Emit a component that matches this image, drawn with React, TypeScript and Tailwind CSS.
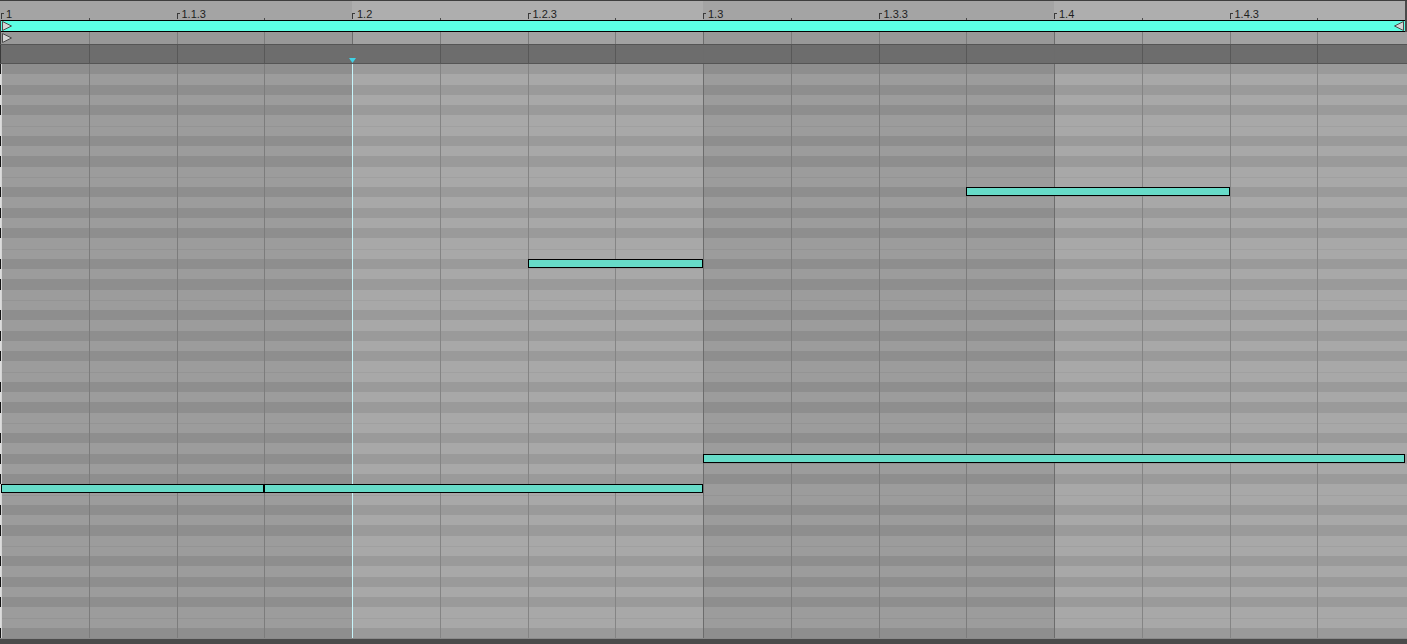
import React from "react";

const ROWS = Array.from({ length: 56 }, (_, i) => i);
const isBlack = (i: number) => [0, 2, 4, 7, 9].includes(i % 12);
const BEATS = [0, 1, 2, 3];
const BEAT_LABELS = ["1", "1.2", "1.3", "1.4"];
const HALF_LABELS = ["1.1.3", "1.2.3", "1.3.3", "1.4.3"];

const NOTES = [
  { k1: 0, k2: 3, row: 41 },
  { k1: 3, k2: 8, row: 41 },
  { k1: 6, k2: 8, row: 19 },
  { k1: 11, k2: 14, row: 12 },
  { k1: 8, k2: 16, row: 38 },
];

const SIX = 87.75;
const ROWH = 10.25;

function rowClass(i: number, light: boolean) {
  if (isBlack(i)) return light ? "bg-[#9a9a9a]" : "bg-[#8e8e8e]";
  const sep = i % 12 === 6 || i % 12 === 11;
  if (light) return sep ? "bg-[#a8a8a8] border-t border-[#a0a0a0]" : "bg-[#a8a8a8]";
  return sep ? "bg-[#9c9c9c] border-t border-[#949494]" : "bg-[#9c9c9c]";
}

function Rows({ light }: { light: boolean }) {
  return (
    <div className="grid h-full grid-rows-[repeat(56,minmax(0,1fr))]">
      {ROWS.map((i) => (
        <div key={i} className={rowClass(i, light)} />
      ))}
    </div>
  );
}

function KeyEdge() {
  return (
    <div className="grid h-full w-px grid-rows-[repeat(56,minmax(0,1fr))]">
      {ROWS.map((i) => (
        <div key={i} className={isBlack(i) ? "bg-[#141414]" : "bg-[#dcdcdc]"} />
      ))}
    </div>
  );
}

function Lines({ beat, first, line }: { beat: number; first: string; line: string }) {
  return (
    <>
      <div className={beat === 0 ? first : "border-l border-[#6c6c6c]"} />
      <div className={line} />
      <div className={line} />
      <div className={line} />
    </>
  );
}

function TriRight() {
  return (
    <svg width="10" height="10" viewBox="0 0 10 10" className="block shrink-0">
      <polygon points="0.5,0.5 9.5,5 0.5,9.5" fill="#d4d4d4" stroke="#4a4a4a" strokeWidth="1" />
    </svg>
  );
}

function TriLeft() {
  return (
    <svg width="10" height="10" viewBox="0 0 10 10" className="block shrink-0">
      <polygon points="9.5,0.5 0.5,5 9.5,9.5" fill="#d4d4d4" stroke="#4a4a4a" strokeWidth="1" />
    </svg>
  );
}

export default function App() {
  return (
    <div className="flex h-[644px] w-[1407px] flex-col overflow-hidden bg-[#4b4b4b] font-['Liberation_Sans',Arial,sans-serif]">
      {/* top line */}
      <div className="h-px shrink-0 bg-[#3e3e3e]" />

      {/* ruler */}
      <div className="flex h-[19px] shrink-0">
        <div className="w-px bg-[#a4a4a4]" />
        <div className="flex w-[1404px]">
          {BEATS.map((b) => (
            <div
              key={b}
              className={"grid flex-1 grid-cols-4 " + (b % 2 === 0 ? "bg-[#a4a4a4]" : "bg-[#aeaeae]")}
            >
              <div className="flex items-start">
                <div className="mt-[12px] h-[6px] w-[3px] border-l border-t border-[#3a3a3a]" />
                <span className="ml-[2px] mt-[8px] text-[11px] leading-[11px] text-[#1e1e1e]">
                  {BEAT_LABELS[b]}
                </span>
              </div>
              <div className="flex items-start">
                <div className="mt-[17px] h-[2px] w-px bg-[#4a4a4a]" />
              </div>
              <div className="flex items-start">
                <div className="mt-[12px] h-[6px] w-[3px] border-l border-t border-[#3a3a3a]" />
                <span className="ml-[2px] mt-[8px] text-[11px] leading-[11px] text-[#1e1e1e]">
                  {HALF_LABELS[b]}
                </span>
              </div>
              <div className="flex items-start">
                <div className="mt-[17px] h-[2px] w-px bg-[#4a4a4a]" />
              </div>
            </div>
          ))}
        </div>
        <div className="w-[2px] bg-[#4a4a4a]" />
      </div>

      {/* loop bar */}
      <div className="flex h-[12px] shrink-0">
        <div className="w-px bg-[#3a3a3a]" />
        <div className="flex w-[1404px] items-center justify-between border-y border-black bg-[#5cffe4]">
          <div className="ml-px">
            <TriRight />
          </div>
          <div className="mr-px">
            <TriLeft />
          </div>
        </div>
        <div className="w-[2px] bg-[#4a4a4a]" />
      </div>

      {/* marker row */}
      <div className="flex h-[12px] shrink-0">
        <div className="w-px bg-[#3a3a3a]" />
        <div className="relative flex w-[1404px]">
          {BEATS.map((b) => (
            <div
              key={b}
              className={"grid flex-1 grid-cols-4 " + (b % 2 === 0 ? "bg-[#989898]" : "bg-[#a2a2a2]")}
            >
              <Lines beat={b} first="" line="border-l border-[#7c7c7c]" />
            </div>
          ))}
          <div className="absolute left-px top-px">
            <TriRight />
          </div>
        </div>
        <div className="w-[2px] bg-[#a2a2a2]" />
      </div>

      {/* dark band */}
      <div className="flex h-[20px] shrink-0 border-y border-[#555555]">
        <div className="w-px bg-[#3a3a3a]" />
        <div className="relative flex w-[1404px]">
          {BEATS.map((b) => (
            <div key={b} className="grid flex-1 grid-cols-4 bg-[#6d6d6d]">
              <Lines beat={b} first="" line="border-l border-[#585858]" />
            </div>
          ))}
          <svg
            width="7"
            height="5"
            viewBox="0 0 7 5"
            className="absolute left-[348px] top-[13px] block"
          >
            <polygon points="0,0 7,0 3.5,5" fill="#3fd3e6" />
          </svg>
        </div>
        <div className="w-[2px] bg-[#6d6d6d]" />
      </div>

      {/* note grid */}
      <div className="flex h-[574px] shrink-0">
        <KeyEdge />
        <div className="relative flex w-[1404px]">
          {BEATS.map((b) => (
            <div key={b} className="relative flex-1">
              <Rows light={b % 2 === 1} />
              <div className="pointer-events-none absolute inset-0 grid grid-cols-4">
                <Lines
                  beat={b}
                  first="border-l border-[#d4d4d4]"
                  line={b % 2 === 1 ? "border-l border-[#848484]" : "border-l border-[#7c7c7c]"}
                />
              </div>
            </div>
          ))}

          {/* playhead */}
          <div className="absolute bottom-0 left-[351px] top-0 w-px bg-[#c6f5fb]" />

          {/* notes */}
          {NOTES.map((n, idx) => (
            <div
              key={idx}
              className="absolute h-[9px] border border-black bg-[#67dbc8]"
              style={{
                left: n.k1 * SIX,
                width: (n.k2 - n.k1) * SIX,
                top: n.row * ROWH,
              }}
            />
          ))}
        </div>
        <div className="w-[2px]">
          <Rows light={true} />
        </div>
      </div>

      {/* bottom */}
      <div className="h-[6px] shrink-0 border-t border-[#8a8a8a] bg-[#4b4b4b]" />
    </div>
  );
}
